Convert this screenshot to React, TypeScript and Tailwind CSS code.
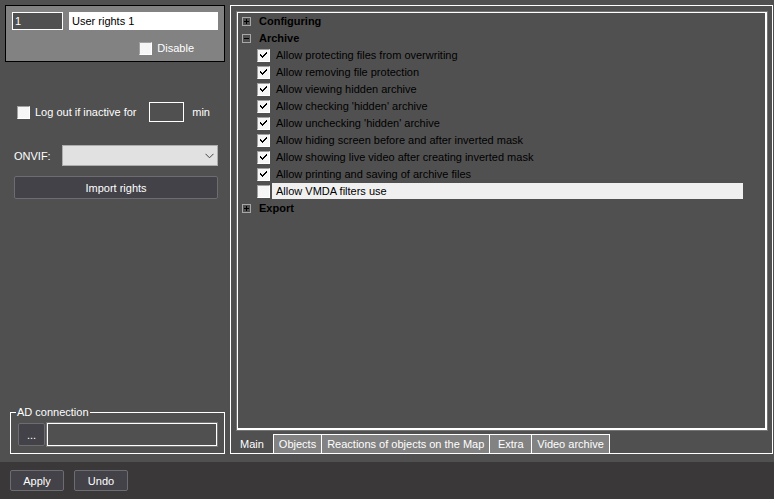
import { useState } from 'react';
import type { InputHTMLAttributes } from 'react';

const archiveRights = [
  { label: 'Allow protecting files from overwriting', on: true },
  { label: 'Allow removing file protection', on: true },
  { label: 'Allow viewing hidden archive', on: true },
  { label: "Allow checking 'hidden' archive", on: true },
  { label: "Allow unchecking 'hidden' archive", on: true },
  { label: 'Allow hiding screen before and after inverted mask', on: true },
  { label: 'Allow showing live video after creating inverted mask', on: true },
  { label: 'Allow printing and saving of archive files', on: true },
  { label: 'Allow VMDA filters use', on: false },
];

const tabs = ['Main', 'Objects', 'Reactions of objects on the Map', 'Extra', 'Video archive'];

const buttonClass =
  'rounded-xs border border-[#6c6c71] bg-[#434249] text-white hover:bg-[#504f57]';

function Checkbox(props: InputHTMLAttributes<HTMLInputElement>) {
  return (
    <span className="relative flex size-[13px] shrink-0">
      <input
        type="checkbox"
        className="peer size-full appearance-none border border-t-[#a0a0a0] border-l-[#a0a0a0] border-r-white border-b-white bg-[#f6f6f6]"
        {...props}
      />
      <svg
        className="pointer-events-none absolute inset-0 hidden peer-checked:block"
        viewBox="0 0 13 13"
        shapeRendering="crispEdges"
        fill="#000"
      >
        <path d="M3 5h1v1h1v1h1v-1h1v-1h1v-1h1v-1h1v2h-1v1h-1v1h-1v1h-1v1h-1v-1h-1v-1h-1z" />
      </svg>
    </span>
  );
}

function GroupRow({ label, open, onToggle }: { label: string; open: boolean; onToggle: () => void }) {
  return (
    <button
      type="button"
      aria-expanded={open}
      onClick={onToggle}
      className="flex h-[17px] items-center gap-2 pb-px pl-1 font-bold text-black"
    >
      <svg className="size-[9px]" viewBox="0 0 9 9" shapeRendering="crispEdges" fill="none">
        <path d="M.5 .5h8v8h-8z" stroke="#a8a8a8" />
        <path d={open ? 'M2 4.5h5' : 'M2 4.5h5M4.5 2v5'} stroke="#000" />
      </svg>
      {label}
    </button>
  );
}

function RightsTree() {
  const [open, setOpen] = useState({ configuring: false, archive: true, exporting: false });
  const [selected, setSelected] = useState('Allow VMDA filters use');

  return (
    <div className="flex-1 border border-[#747474]">
      <div className="h-full border border-r-2 border-b-2 border-white">
        <GroupRow
          label="Configuring"
          open={open.configuring}
          onToggle={() => setOpen({ ...open, configuring: !open.configuring })}
        />
        <GroupRow
          label="Archive"
          open={open.archive}
          onToggle={() => setOpen({ ...open, archive: !open.archive })}
        />
        {open.archive && (
          <ul className="pr-[22px] pl-[19px]">
            {archiveRights.map((right) => (
              <li key={right.label} onClick={() => setSelected(right.label)}>
                <label className="flex h-[17px] items-center gap-[2px] pb-px text-black">
                  <Checkbox defaultChecked={right.on} />
                  <span
                    className={
                      right.label === selected
                        ? 'flex-1 bg-[#f0f0f0] pl-1 leading-4'
                        : 'flex-1 pl-1 leading-4'
                    }
                  >
                    {right.label}
                  </span>
                </label>
              </li>
            ))}
          </ul>
        )}
        <GroupRow
          label="Export"
          open={open.exporting}
          onToggle={() => setOpen({ ...open, exporting: !open.exporting })}
        />
      </div>
    </div>
  );
}

export default function App() {
  const [tab, setTab] = useState('Main');

  return (
    <div className="flex min-h-screen flex-col bg-[#505050] font-['Liberation_Sans',Arial,sans-serif] text-[11px] leading-4 text-white">
      <main className="flex flex-1 gap-[5px] pt-[5px] pr-px pb-2 pl-[5px]">
        <section className="flex w-[220px] shrink-0 flex-col">
          <div className="flex flex-col gap-[10px] border border-black bg-[#828282] px-[6px] pt-[6px] pb-[5px]">
            <div className="flex gap-[6px]">
              <input
                aria-label="Number"
                defaultValue="1"
                readOnly
                className="h-[18px] w-[51px] border border-white bg-[#505050] px-[2px]"
              />
              <input
                aria-label="Name"
                defaultValue="User rights 1"
                className="h-[18px] min-w-0 flex-1 bg-white px-[3px] text-black"
              />
            </div>
            <label className="flex items-center gap-[5px] self-end pr-6">
              <Checkbox />
              Disable
            </label>
          </div>

          <div className="mt-10 flex items-center pl-3">
            <label className="flex items-center gap-[5px]">
              <Checkbox />
              Log out if inactive for
            </label>
            <label className="ml-auto flex items-center gap-2 pr-[15px]">
              <input aria-label="Minutes" className="h-5 w-[35px] border border-white px-1" />
              min
            </label>
          </div>

          <label className="mt-[23px] flex items-center justify-between pr-[7px] pl-[9px]">
            ONVIF:
            <span className="relative flex">
              <select className="h-[21px] w-[156px] appearance-none border border-[#adadad] bg-[#e1e1e1] px-1 text-black">
                <option></option>
              </select>
              <svg
                className="pointer-events-none absolute top-2 right-1 h-[6px] w-[9px]"
                viewBox="0 0 9 6"
                fill="none"
                stroke="#444"
              >
                <path d="M.5 .8l4 4 4-4" />
              </svg>
            </span>
          </label>

          <button type="button" className={`${buttonClass} mt-[10px] mr-[7px] ml-[9px] h-[23px]`}>
            Import rights
          </button>

          <fieldset className="mt-auto ml-[5px] border border-white px-[7px] pt-[3px] pb-[7px]">
            <legend className="-ml-[2px] px-px">AD connection</legend>
            <div className="flex gap-[2px]">
              <button type="button" aria-label="Browse" className={`${buttonClass} h-[23px] w-[27px]`}>
                ...
              </button>
              <input
                aria-label="AD connection"
                className="h-[23px] min-w-0 flex-1 border border-white px-1 outline outline-[#747474]"
              />
            </div>
          </fieldset>
        </section>

        <section className="flex flex-1 flex-col border border-white pt-[5px]">
          <div className="flex flex-1 pr-1 pl-[5px]">
            <RightsTree />
          </div>
          <div role="tablist" className="mt-[3px] flex">
            {tabs.map((name, i) => (
              <button
                key={name}
                type="button"
                role="tab"
                aria-selected={tab === name}
                onClick={() => setTab(name)}
                className={
                  tab === name
                    ? `h-[19px] px-[9px] ${i === 0 ? 'border-r border-white' : 'border-t border-r border-white'}`
                    : 'h-[19px] min-w-[42px] border-t border-r border-white bg-[#828282] px-[5px]'
                }
              >
                {name}
              </button>
            ))}
          </div>
        </section>
      </main>

      <footer className="flex gap-[10px] bg-[#3a3838] px-[10px] py-2">
        <button type="button" className={`${buttonClass} h-[21px] w-[54px]`}>
          Apply
        </button>
        <button type="button" className={`${buttonClass} h-[21px] w-[54px]`}>
          Undo
        </button>
      </footer>
    </div>
  );
}
